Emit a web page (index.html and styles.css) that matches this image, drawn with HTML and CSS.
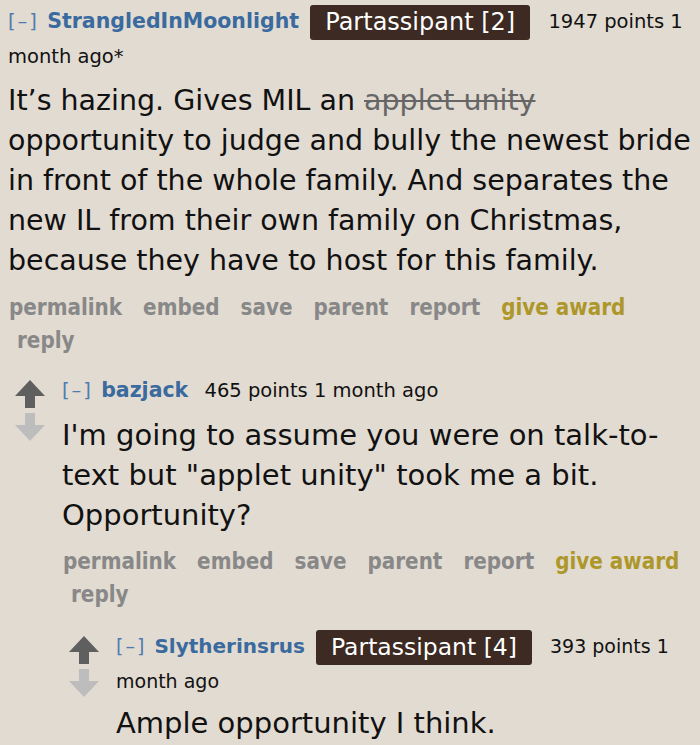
FILE: index.html
```html
<!DOCTYPE html>
<html lang="en">
<head>
    <meta charset="UTF-8">
    <title>Comments</title>
    <link rel="stylesheet" href="styles.css">
</head>
<body>
    <div class="thread">
        <div class="comment top">
            <div class="entry">
                <p class="tagline">
                    <span class="toggle">[–]</span>
                    <span class="author">StrangledInMoonlight</span>
                    <span class="flair">Partassipant [2]</span>
                    <span class="score">1947 points 1 month ago*</span>
                </p>
                <div class="md">It’s hazing. Gives MIL an <del>applet unity</del> opportunity to judge and bully the newest bride in front of the whole family. And separates the new IL from their own family on Christmas, because they have to host for this family.</div>
                <ul class="buttons">
                    <li>permalink</li>
                    <li>embed</li>
                    <li>save</li>
                    <li>parent</li>
                    <li>report</li>
                    <li class="gild">give award</li>
                    <li class="reply">reply</li>
                </ul>
            </div>

            <div class="comment child">
                <div class="votes">
                    <svg class="up" viewBox="0 0 30 28"><path d="M15 0 L30 16 L20 16 L20 28 L10 28 L10 16 L0 16 Z"/></svg>
                    <svg class="down" viewBox="0 0 30 28"><path d="M10 0 L20 0 L20 12 L30 12 L15 28 L0 12 L10 12 Z"/></svg>
                </div>
                <div class="entry">
                    <p class="tagline">
                        <span class="toggle">[–]</span>
                        <span class="author">bazjack</span>
                        <span class="score">465 points 1 month ago</span>
                    </p>
                    <div class="md">I'm going to assume you were on talk-to-text but "applet unity" took me a bit. Opportunity?</div>
                    <ul class="buttons">
                        <li>permalink</li>
                        <li>embed</li>
                        <li>save</li>
                        <li>parent</li>
                        <li>report</li>
                        <li class="gild">give award</li>
                        <li class="reply">reply</li>
                    </ul>

                    <div class="comment child deep">
                        <div class="votes">
                            <svg class="up" viewBox="0 0 30 28"><path d="M15 0 L30 16 L20 16 L20 28 L10 28 L10 16 L0 16 Z"/></svg>
                            <svg class="down" viewBox="0 0 30 28"><path d="M10 0 L20 0 L20 12 L30 12 L15 28 L0 12 L10 12 Z"/></svg>
                        </div>
                        <div class="entry">
                            <p class="tagline">
                                <span class="toggle">[–]</span>
                                <span class="author">Slytherinsrus</span>
                                <span class="flair">Partassipant [4]</span>
                                <span class="score">393 points 1 month ago</span>
                            </p>
                            <div class="md">Ample opportunity I think.</div>
                        </div>
                    </div>
                </div>
            </div>
        </div>
    </div>
</body>
</html>
```

FILE: styles.css
```css
body,p,ul{
    margin:0;
}
ul{
    padding-left:0;
    list-style-type:none;
}
body{
    background-color:#e2dbd1;
    font-family:"DejaVu Sans", Verdana, sans-serif;
    color:#111;
}
.thread{
    padding:5px 0 0 8px;
}
/* 评论头部 */
.tagline{
    font-size:19.5px;
    line-height:33px;
}
.toggle{
    color:#4f7cb0;
    letter-spacing:2px;
}
.author{
    color:#3a6a9e;
    font-weight:bold;
    font-size:20.5px;
    margin-left:2px;
    margin-right:5px;
}
.author+.score{
    margin-left:5px;
}
.flair{
    display:inline-block;
    vertical-align:top;
    background-color:#3d2a22;
    color:#fff;
    font-size:24px;
    line-height:35px;
    padding:0 15px;
    border-radius:3px;
    margin-right:12px;
}
.score{
    color:#111;
}
/* 正文 */
.md{
    font-size:29px;
    line-height:40px;
    margin-top:8px;
}
.top>.entry .md{
    font-size:28.5px;
}
.md del{
    color:#666;
}
/* 按钮 */
.buttons{
    display:flex;
    flex-wrap:wrap;
    column-gap:21px;
    font-family:"DejaVu Sans Condensed", "DejaVu Sans", sans-serif;
    font-stretch:condensed;
    font-weight:bold;
    font-size:22.2px;
    line-height:33px;
    color:#888;
    margin-top:10px;
    padding-left:1px;
}
.buttons .gild{
    color:#ad972b;
}
.buttons .reply{
    flex-basis:100%;
    padding-left:8px;
}
/* 子评论 */
.child{
    display:flex;
    margin-top:17px;
}
.child.deep{
    margin-top:19px;
}
.deep .tagline{
    font-size:19px;
}
.deep .author{
    font-size:20px;
}
.deep .flair{
    font-size:23.5px;
}
.deep .md{
    margin-top:5px;
}
.votes{
    display:flex;
    flex-direction:column;
    gap:5px;
    width:54px;
    flex-shrink:0;
    padding-top:6px;
}
.votes svg{
    width:30px;
    height:28px;
    margin-left:7px;
}
.votes .up{
    fill:#5f5f5f;
}
.votes .down{
    fill:#bdbdbd;
}
.child .entry{
    flex:1;
}
```
